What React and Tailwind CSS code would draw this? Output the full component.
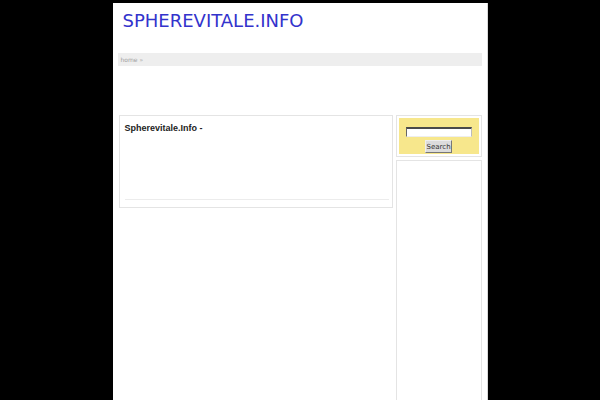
export default function App() {
  return (
    <div className="min-h-[400px] bg-black pt-[3px]">
      <div className="mx-auto w-[375px] min-h-[397px] bg-white px-[5px] border-r border-r-[#d9d9d9]">
        <div className="h-[50px] pt-[7px] pl-[5px]">
          <h1
            className="text-[18px] leading-[21px] text-[#3333cc] font-normal"
            style={{ fontFamily: '"DejaVu Sans", sans-serif' }}
          >
            SPHEREVITALE.INFO
          </h1>
        </div>
        <div
          className="h-[13px] bg-[#eeeeee] flex items-center pl-[3px] text-[6px] text-[#a0a0a0]"
          style={{ fontFamily: '"DejaVu Sans", sans-serif' }}
        >
          home »
        </div>
        <div className="mt-[49px] flex gap-[3px] items-start">
          <div className="ml-[1px] w-[275px] border border-[#e4e4e4] pt-[7px] pb-[7px]">
            <h2
              className="ml-[5px] text-[9px] leading-[11px] font-bold text-[#222]"
              style={{ fontFamily: '"Liberation Sans", Arial, sans-serif' }}
            >
              Spherevitale.Info -
            </h2>
            <div className="mt-[65px] ml-[5px] mr-[3px] border-t border-t-[#ececec]" />
          </div>
          <div className="w-[86px] flex flex-col gap-[3px]">
            <div className="border border-[#e4e4e4] p-[2px]">
              <div className="h-[36px] bg-[#f7e78c] pt-[9px] flex flex-col items-center">
                <input
                  type="text"
                  className="w-[66px] h-[10px] bg-white border-t-2 border-t-[#4a4a4a] border-l border-l-[#666] border-r border-r-[#bbb] border-b border-b-[#eee] outline-none"
                />
                <button
                  className="mt-[3px] w-[27px] h-[13px] bg-[#dcdcdc] border border-t-[#eee] border-l-[#eee] border-r-[#777] border-b-[#777] text-[7px] leading-[10px] text-[#333] flex items-center justify-center"
                  style={{ fontFamily: '"DejaVu Sans", sans-serif' }}
                >
                  Search
                </button>
              </div>
            </div>
            <div className="h-[250px] border border-[#e4e4e4]" />
          </div>
        </div>
      </div>
    </div>
  );
}
